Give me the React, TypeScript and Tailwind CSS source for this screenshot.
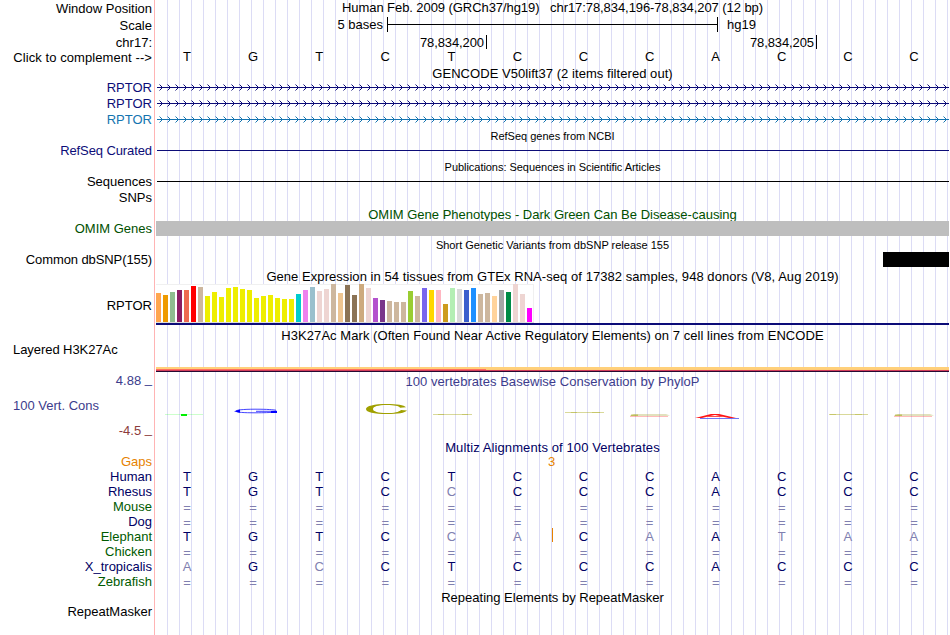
import React from "react";
import clsx from "clsx";

const LABELS = [
  { text: "Window Position", row: "h-[17px]", color: "text-black" },
  { text: "Scale", row: "h-[17px]", color: "text-black" },
  { text: "chr17:", row: "h-[15px]", color: "text-black" },
  { text: "Click to complement -->", row: "h-[30px] tracking-[0.08px]", color: "text-black" },
  { text: "RPTOR", row: "h-4", color: "text-[#0c0c78]" },
  { text: "RPTOR", row: "h-4", color: "text-[#0c0c78]" },
  { text: "RPTOR", row: "h-[31px]", color: "text-[#1474b0]" },
  { text: "RefSeq Curated", row: "h-[31px] tracking-[-0.1px]", color: "text-[#0c0c78]" },
  { text: "Sequences", row: "h-4", color: "text-black" },
  { text: "SNPs", row: "h-[31px]", color: "text-black" },
  { text: "OMIM Genes", row: "h-[31px]", color: "text-[#005000]" },
  { text: "Common dbSNP(155)", row: "h-[46px] tracking-[-0.1px]", color: "text-black" },
  { text: "RPTOR", row: "h-11", color: "text-black" },
  { text: "Layered H3K27Ac", row: "h-[31px] tracking-[-0.06px]", color: "text-black", left: true },
  { text: "4.88", row: "h-[25px]", color: "text-[#3c3c8c]", tick: true },
  { text: "100 Vert. Cons", row: "h-[25px]", color: "text-[#3c3c8c]", left: true },
  { text: "-4.5", row: "h-[31px]", color: "text-[#8c3c3c]", tick: true },
  { text: "Gaps", row: "h-[15px]", color: "text-[#e68200]" },
  { text: "Human", row: "h-[15px]", color: "text-[#000064]" },
  { text: "Rhesus", row: "h-[15px]", color: "text-[#000064]" },
  { text: "Mouse", row: "h-[15px]", color: "text-[#005a00]" },
  { text: "Dog", row: "h-[15px]", color: "text-[#000064]" },
  { text: "Elephant", row: "h-[15px]", color: "text-[#005a00]" },
  { text: "Chicken", row: "h-[15px]", color: "text-[#005a00]" },
  { text: "X_tropicalis", row: "h-[15px]", color: "text-[#000064]" },
  { text: "Zebrafish", row: "h-[30px]", color: "text-[#005a00]" },
  { text: "RepeatMasker", row: "h-[15px]", color: "text-black" },
];

// lower case marks a base that differs from the human one
const ALIGNMENTS = [
  { species: "Human", bases: "TGTCTCCCACCC" },
  { species: "Rhesus", bases: "TGTCcCCCACCC" },
  { species: "Mouse", bases: "============" },
  { species: "Dog", bases: "============" },
  { species: "Elephant", bases: "TGTCcaCaAtaa", insertion: true },
  { species: "Chicken", bases: "============" },
  { species: "X_tropicalis", bases: "aGcCTCCCACCC" },
  { species: "Zebrafish", bases: "============" },
];

const TISSUES: [string, number][] = [
  ["#ffa54f", 29],
  ["#ee9a00", 27],
  ["#8fbc8f", 30],
  ["#8b1c62", 32],
  ["#ee6a50", 32],
  ["#ff0000", 36],
  ["#cdb79e", 35],
  ["#eeee00", 26],
  ["#eeee00", 30],
  ["#eeee00", 25],
  ["#eeee00", 34],
  ["#eeee00", 35],
  ["#eeee00", 33],
  ["#eeee00", 32],
  ["#eeee00", 24],
  ["#eeee00", 26],
  ["#eeee00", 27],
  ["#eeee00", 24],
  ["#eeee00", 23],
  ["#eeee00", 23],
  ["#00cdcd", 28],
  ["#ee82ee", 32],
  ["#9ac0cd", 35],
  ["#eed5d2", 31],
  ["#eed5d2", 33],
  ["#cdb79e", 38],
  ["#eec591", 29],
  ["#8b7355", 37],
  ["#8b7355", 27],
  ["#cdaa7d", 38],
  ["#eed5d2", 34],
  ["#b452cd", 24],
  ["#7a378b", 22],
  ["#cdb79e", 21],
  ["#cdb79e", 20],
  ["#cdb79e", 20],
  ["#9acd32", 31],
  ["#cdb79e", 26],
  ["#7a67ee", 34],
  ["#ffd700", 32],
  ["#ffb6c1", 32],
  ["#cd9b1d", 18],
  ["#b4eeb4", 34],
  ["#d9d9d9", 33],
  ["#3a5fcd", 32],
  ["#1e90ff", 34],
  ["#cdb79e", 28],
  ["#cdb79e", 29],
  ["#ffd39b", 26],
  ["#a6a6a6", 32],
  ["#008b45", 30],
  ["#eed5d2", 38],
  ["#eed5d2", 28],
  ["#ff00ff", 14],
];

const Title = ({
  className,
  children,
}: {
  className?: string;
  children: React.ReactNode;
}) => (
  <div className={clsx("shrink-0 text-center whitespace-pre", className)}>
    {children}
  </div>
);

const Bases = ({ bases, color }: { bases: string; color: string }) => (
  <div className="-ml-0.5 mr-0.5 grid grid-cols-12 text-center">
    {bases.split("").map((base, i) => {
      const gap = base === "=";
      const differs = base !== base.toUpperCase();
      return (
        <span
          key={i}
          className={clsx(gap && "pt-px", gap || differs ? "text-[#8080b0]" : color)}
        >
          {base.toUpperCase()}
        </span>
      );
    })}
  </div>
);

const Transcript = ({ color }: { color: string }) => (
  <svg
    className="block h-4 w-[793px] shrink-0"
    viewBox="0 0 793 16"
    stroke={color}
    fill="none"
  >
    <path d="M1 7.5H793" />
    {Array.from({ length: 99 }, (_, i) => (
      <g key={i} transform={`translate(${i * 8} 0)`}>
        <path d="M5 6.5h1M4 5.5h1M5 8.5h1M4 9.5h1" />
        <path d="M3 4.5h1M3 10.5h1" strokeOpacity="0.5" />
      </g>
    ))}
  </svg>
);

const Conservation = () => (
  <svg className="block h-[51px] w-[793px] shrink-0" viewBox="156 389 793 51">
    <path d="M165 414.5H203" stroke="#00ff00" strokeOpacity="0.2" />
    <path d="M181 414H187V416H181Z" fill="#00f000" />
    <path
      d="M276 410.2C271 409.4 263 409.2 255 409.2C243 409.2 236 410 236 411.2C236 412.3 244 412.8 255 412.8C264 412.8 270 412.5 276 412.2M256 411.3H277"
      stroke="#1414ff"
      strokeWidth="0.8"
      fill="none"
    />
    <path d="M234 411.2L240 409.6V412.7ZM271 411H277V413H271Z" fill="#0000ff" />
    <path
      d="M406 407.2C404 405.1 397 404 387 404C374 404 366 406 366 409C366 412.2 374 414 387 414C398 414 405 412.7 407 410.4L401 409.9C399 412 394 413 387 413C378 413 373 411.5 373 409C373 406.6 378 405 387 405C394 405 399 406 400 407.7Z"
      fill="#a0a000"
    />
    <path d="M433 414.5H472" stroke="#a0a000" strokeOpacity="0.4" />
    <path d="M438 414.5H444M462 414.5H468" stroke="#a0a000" strokeOpacity="0.3" />
    <path d="M565 412.5H604" stroke="#a0a000" strokeOpacity="0.4" />
    <path d="M571 412.5H577M592 412.5H600" stroke="#a0a000" strokeOpacity="0.3" />
    <path d="M829 414.5H868" stroke="#a0a000" strokeOpacity="0.4" />
    <path d="M830 414.5H836M855 414.5H862" stroke="#a0a000" strokeOpacity="0.3" />
    {[630, 894].map((x) => (
      <g key={x}>
        <path d={`M${x} 415.5L${x + 4} 414H${x + 36}L${x + 40} 415.5L${x + 36} 416H${x}Z`} fill="#b4b45a" fillOpacity="0.4" />
        <path d={`M${x + 1} 414.5h7v1.5h-7Z`} fill="#a0a000" fillOpacity="0.5" />
        <path d={`M${x} 416.5H${x + 38}`} stroke="#ff3c3c" strokeOpacity="0.35" />
      </g>
    ))}
    <path d="M700 418.5H739" stroke="#5050f0" strokeOpacity="0.8" />
    <path
      d="M695 418L711 414H719L736 418H729L723 416.7H707L702 418ZM710 416H720L715 414.9Z"
      fill="#ff1414"
      fillRule="evenodd"
    />
  </svg>
);

const App = () => {
  return (
    <main className="flex h-[635px] w-[950px] overflow-hidden bg-white font-['Liberation_Sans',Arial,sans-serif] text-[13px] leading-[15px] text-black">
      <aside className="flex w-[155px] shrink-0 flex-col border-r border-[#ffb4b4] pt-px pr-0.5 pl-[13px] text-right whitespace-nowrap">
        {LABELS.map((label, i) => (
          <div
            key={i}
            className={clsx("shrink-0", label.row, label.color, label.left && "text-left")}
          >
            {label.text}
            {label.tick && <span className="relative -top-0.5"> _</span>}
          </div>
        ))}
      </aside>

      <section className="ml-px flex w-[793px] shrink-0 flex-col bg-[repeating-linear-gradient(to_right,transparent_0_11px,#dcdcf5_11px_12px)]">
        <Title className="h-[17px] tracking-[-0.07px]">
          {"Human Feb. 2009 (GRCh37/hg19)   chr17:78,834,196-78,834,207 (12 bp)"}
        </Title>

        <div className="flex h-[17px] shrink-0">
          <span className="w-[231px] pr-1 text-right">5 bases</span>
          <div className="flex h-[15px] w-[331px] items-center border-x border-black">
            <div className="h-px w-full bg-black" />
          </div>
          <span className="pl-[9px]">hg19</span>
        </div>

        <div className="flex h-[15px] shrink-0 pt-px tracking-[-0.1px]">
          <span className="h-3.5 w-[331px] border-r border-black pr-0.5 text-right">
            78,834,200
          </span>
          <span className="h-3.5 w-[330px] border-r border-black pr-0.5 text-right">
            78,834,205
          </span>
        </div>

        <div className="h-[17px] shrink-0">
          <Bases bases="TGTCTCCCACCC" color="text-black" />
        </div>

        <Title className="h-3.5 tracking-[0.05px]">GENCODE V50lift37 (2 items filtered out)</Title>
        <Transcript color="#0c0c78" />
        <Transcript color="#0c0c78" />
        <Transcript color="#1474b0" />

        <Title className="h-[22px] text-[11px] leading-4">RefSeq genes from NCBI</Title>
        <div className="mb-2 ml-px h-px shrink-0 bg-[#0c0c78]" />

        <Title className="h-[22px] text-[11px] leading-4 tracking-[-0.04px]">
          Publications: Sequences in Scientific Articles
        </Title>
        <div className="mb-[25px] ml-px h-px shrink-0 bg-black" />

        <Title className="h-3.5 overflow-hidden text-[#005000]">
          OMIM Gene Phenotypes - Dark Green Can Be Disease-causing
        </Title>
        <div className="h-[15px] shrink-0 bg-[#bebebe]" />

        <Title className="h-4 text-[11px] leading-[18px]">
          Short Genetic Variants from dbSNP release 155
        </Title>
        <div className="ml-auto h-[15px] w-[66px] shrink-0 bg-black" />

        <Title className="h-[17px] pt-0.5 tracking-[0.055px]">
          Gene Expression in 54 tissues from GTEx RNA-seq of 17382 samples, 948 donors (V8, Aug 2019)
        </Title>
        <div className="flex h-[39px] w-[378px] shrink-0 items-end gap-0.5 border-b border-[#dcdcdc] bg-white shadow-[inset_-1px_1px_0_#f0f0f0]">
          {TISSUES.map(([color, height], i) => (
            <div
              key={i}
              className="w-[5px] shrink-0"
              style={{ backgroundColor: color, height }}
            />
          ))}
        </div>
        <div className="h-0.5 shrink-0 bg-[#0c0c78]" />

        <Title className="h-[42px] pt-[3px] tracking-[0.055px]">
          H3K27Ac Mark (Often Found Near Active Regulatory Elements) on 7 cell lines from ENCODE
        </Title>
        <div className="shrink-0">
          <div className="h-0.5 bg-[#ffd07a]" />
          <div className="flex h-px bg-[#ffcc78]">
            <div className="w-[330px] bg-[#ff7060]" />
          </div>
          <div className="h-px bg-[#d23c5a]" />
          <div className="h-px bg-[#280a32]" />
        </div>

        <Title className="h-[17px] pt-0.5 tracking-[0.04px] text-[#3c3c8c]">
          100 vertebrates Basewise Conservation by PhyloP
        </Title>
        <Conservation />

        <Title className="h-3.5 tracking-[0.1px] text-[#000064]">
          Multiz Alignments of 100 Vertebrates
        </Title>
        <div className="h-[15px] shrink-0 pl-[392px] text-[#e68200]">3</div>
        {ALIGNMENTS.map((row) => (
          <div key={row.species} className="relative h-[15px] shrink-0">
            <Bases bases={row.bases} color="text-[#000064]" />
            {row.insertion && (
              <div className="absolute -top-px left-[396px] h-3.5 w-px bg-[#e68200]" />
            )}
          </div>
        ))}
        <Title className="pt-px">Repeating Elements by RepeatMasker</Title>
      </section>
    </main>
  );
};

export default App;
